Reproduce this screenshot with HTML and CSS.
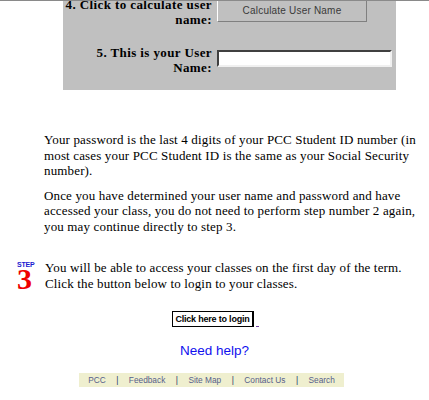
FILE: index.html
```html
<!DOCTYPE html>
<html>
<head>
<meta charset="utf-8">
<link rel="stylesheet" href="styles.css">
</head>
<body>
<div class="frame">
  <div class="page">
    <div class="form-box">
      <div class="form-row row4">
        <div class="label">4. Click to calculate user name:</div>
        <div class="control"><button class="calc-btn">Calculate User Name</button></div>
      </div>
      <div class="form-row row5">
        <div class="label">5. This is your User Name:</div>
        <div class="control"><input class="user-input" type="text"></div>
      </div>
    </div>

    <div class="content">
      <p>Your password is the last 4 digits of your PCC Student ID number (in most cases your PCC Student ID is the same as your Social Security number).</p>
      <p>Once you have determined your user name and password and have accessed your class, you do not need to perform step number 2 again, you may continue directly to step 3.</p>
    </div>

    <div class="step">
      <div class="step-badge"><span class="step-word">STEP</span><span class="step-num">3</span></div>
      <p class="step-text">You will be able to access your classes on the first day of the term.<br>Click the button below to login to your classes.</p>
    </div>

    <div class="login-wrap">
      <span class="login-btn">Click here to login</span><span class="login-tail"></span>
    </div>

    <div class="help"><a href="#">Need help?</a></div>

    <div class="footer">
      <span>PCC</span><span class="sep">|</span><span>Feedback</span><span class="sep">|</span><span>Site Map</span><span class="sep">|</span><span>Contact Us</span><span class="sep">|</span><span>Search</span>
    </div>
  </div>
</div>
</body>
</html>
```

FILE: styles.css
```css
html, body {
  margin: 0;
  padding: 0;
  background: #ffffff;
}
.frame {
  height: 400px;
  overflow: hidden;
  position: relative;
}
.frame::before {
  content: "";
  position: absolute;
  left: 0;
  right: 0;
  top: 0;
  height: 1px;
  background: #8a8a8a;
  z-index: 2;
}
.page {
  margin-top: -15px;
  font-family: "Liberation Serif", "Times New Roman", serif;
  font-size: 13px;
  color: #000;
}
.form-box {
  margin-left: 63px;
  width: 333px;
  background: #c0c0c0;
  padding: 12px 0 15px 0;
  display: flex;
  flex-direction: column;
  gap: 18px;
}
.form-row {
  display: flex;
  align-items: center;
  gap: 5px;
}
.label {
  width: 149px;
  flex: none;
  text-align: right;
  font-weight: bold;
  line-height: 15px;
  letter-spacing: 0.4px;
}
.calc-btn {
  width: 150px;
  height: 22px;
  margin-top: -9px;
  background: #c0c0c0;
  border: 1px solid;
  border-color: #ffffff #808080 #808080 #ffffff;
  font-family: "Liberation Sans", Arial, sans-serif;
  font-size: 10px;
  letter-spacing: 0.2px;
  color: #3a3a3a;
  padding: 0;
}
.user-input {
  display: block;
  width: 175px;
  height: 17px;
  box-sizing: border-box;
  margin: -3px 0 0 0;
  border: 2px solid;
  border-color: #404040 #f0f0f0 #f0f0f0 #404040;
  background: #fff;
  padding: 0;
}
.content {
  margin: 42px 0 0 44px;
  width: 382px;
}
.content p {
  margin: 0 0 9px 0;
  line-height: 15.5px;
  letter-spacing: 0.15px;
}
.step {
  display: flex;
  margin-top: 26px;
  align-items: flex-start;
}
.step-badge {
  width: 28px;
  padding-left: 17px;
  display: flex;
  flex-direction: column;
  margin-top: 1px;
}
.step-word {
  font-family: "Liberation Sans", Arial, sans-serif;
  font-weight: bold;
  font-size: 7px;
  line-height: 7px;
  color: #1a1ad0;
  letter-spacing: -0.2px;
}
.step-num {
  font-family: "Liberation Serif", serif;
  font-weight: bold;
  font-size: 30px;
  line-height: 20px;
  padding-top: 1px;
  color: #ee0000;
}
.step-text {
  margin: 0;
  line-height: 15.5px;
  letter-spacing: 0.15px;
}
.login-wrap {
  margin-top: 20px;
  display: flex;
  justify-content: center;
  align-items: flex-end;
  padding-left: 2px;
}
.login-btn {
  display: inline-block;
  font-family: "Liberation Sans", Arial, sans-serif;
  font-size: 9px;
  font-weight: bold;
  letter-spacing: -0.2px;
  line-height: 12px;
  padding: 1px 2px;
  border: 1px solid #000;
  border-right-width: 2px;
  background: #fff;
}
.login-tail {
  display: inline-block;
  width: 3px;
  height: 1px;
  background: #7040a0;
  margin-left: 2px;
}
.help {
  text-align: center;
  margin-top: 16px;
  padding-left: 0;
}
.help a {
  font-family: "Liberation Sans", Arial, sans-serif;
  font-size: 13.5px;
  color: #1010ee;
  text-decoration: none;
}
.footer {
  margin: 14px 0 0 79px;
  width: 265px;
  height: 14px;
  background: #efefcf;
  display: flex;
  justify-content: center;
  align-items: center;
  gap: 10.5px;
  white-space: nowrap;
  font-family: "Liberation Sans", Arial, sans-serif;
  font-size: 8.3px;
  color: #56608a;
}
.sep {
  color: #223366;
}
```
